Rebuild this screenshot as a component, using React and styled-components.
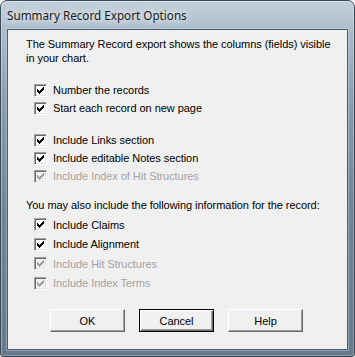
import React from "react";
import styled, { createGlobalStyle, css } from "styled-components";

const GlobalStyle = createGlobalStyle`
  html, body {
    margin: 0;
    padding: 0;
    background: #ffffff;
  }
`;

const Window = styled.div`
  box-sizing: border-box;
  width: 355px;
  height: 357px;
  border: 1px solid #3b4856;
  border-radius: 7px 7px 3px 3px;
  padding: 0 6px 6px 6px;
  display: flex;
  flex-direction: column;
  background: linear-gradient(
    to bottom,
    #c4d0dc 0px,
    #aebdcc 28px,
    #8fa1b3 90px,
    #72859a 200px,
    #66798d 100%
  );
  box-shadow: inset 1px 1px 0 rgba(255, 255, 255, 0.35),
    inset -1px -1px 0 rgba(255, 255, 255, 0.25);
  font-family: "Liberation Sans", Arial, sans-serif;
`;

const TitleBar = styled.div`
  height: 28px;
  display: flex;
  align-items: center;
  font-family: "Noto Sans", "Open Sans", sans-serif;
  font-size: 11.7px;
  color: #1a1a1a;
  text-shadow: 0 0 6px rgba(255, 255, 255, 0.95), 0 0 10px rgba(255, 255, 255, 0.8);
`;

const Client = styled.div`
  flex: 1;
  background: #f0f0f0;
  border: 1px solid #4c5c6d;
  box-shadow: 0 0 0 1px rgba(200, 215, 230, 0.45);
  padding: 7px 0 0 18px;
  font-size: 11px;
  letter-spacing: -0.05px;
  color: #000;
  white-space: nowrap;
`;

const Para = styled.div`
  line-height: 14px;
  margin-top: ${(p) => p.$top || 0}px;
`;

const Group = styled.div`
  margin-top: ${(p) => p.$top}px;
  padding-left: 8px;
`;

const Row = styled.div`
  height: ${(p) => p.$h}px;
  display: flex;
  align-items: center;
  gap: 6px;
  color: ${(p) => (p.$disabled ? "#a3a3a3" : "#000")};
`;

const Box = styled.span`
  box-sizing: border-box;
  width: 13px;
  height: 13px;
  flex: none;
  display: flex;
  align-items: center;
  justify-content: center;
  background: ${(p) => (p.$disabled ? "#f0f0f0" : "#fff")};
  border: 1px solid;
  border-color: #a0a0a0 #ffffff #ffffff #a0a0a0;
  box-shadow: inset 1px 1px 0 #696969, inset -1px -1px 0 #e3e3e3;
`;

const ButtonRow = styled.div`
  margin-top: 16px;
  display: flex;
  gap: 14px;
  padding-left: 24px;
`;

const Button = styled.div`
  box-sizing: border-box;
  width: 75px;
  height: 23px;
  display: flex;
  align-items: center;
  justify-content: center;
  background: #f0f0f0;
  border: 1px solid;
  border-color: #ffffff #696969 #696969 #ffffff;
  box-shadow: inset -1px -1px 0 #a0a0a0;
  ${(p) =>
    p.$default &&
    css`
      border: 1px solid #000;
      box-shadow: inset 1px 1px 0 #fff, inset -1px -1px 0 #696969,
        inset -2px -2px 0 #a0a0a0;
    `}
`;

const Check = ({ disabled }) => {
  const px = [
    [6, 0], [5, 1], [6, 1], [0, 2], [4, 2], [5, 2], [6, 2],
    [0, 3], [1, 3], [3, 3], [4, 3], [5, 3],
    [0, 4], [1, 4], [2, 4], [3, 4], [4, 4],
    [1, 5], [2, 5], [3, 5], [2, 6],
  ];
  return (
    <svg width="7" height="7" viewBox="0 0 7 7" shapeRendering="crispEdges">
      {px.map(([x, y]) => (
        <rect key={`${x}-${y}`} x={x} y={y} width="1" height="1" fill={disabled ? "#a0a0a0" : "#000"} />
      ))}
    </svg>
  );
};

const CheckRow = ({ label, disabled, h }) => (
  <Row $h={h} $disabled={disabled}>
    <Box $disabled={disabled}>
      <Check disabled={disabled} />
    </Box>
    <span>{label}</span>
  </Row>
);

export default function App() {
  return (
    <>
      <GlobalStyle />
      <Window>
        <TitleBar>Summary Record Export Options</TitleBar>
        <Client>
          <Para>
            The Summary Record export shows the columns (fields) visible
            <br />
            in your chart.
          </Para>
          <Group $top={16}>
            <CheckRow h={18} label="Number the records" />
            <CheckRow h={18} label="Start each record on new page" />
          </Group>
          <Group $top={14}>
            <CheckRow h={18} label="Include Links section" />
            <CheckRow h={18} label="Include editable Notes section" />
            <CheckRow h={18} disabled label="Include Index of Hit Structures" />
          </Group>
          <Para $top={13}>
            You may also include the following information for the record:
          </Para>
          <Group $top={3}>
            <CheckRow h={19.5} label="Include Claims" />
            <CheckRow h={19.5} label="Include Alignment" />
            <CheckRow h={19.5} disabled label="Include Hit Structures" />
            <CheckRow h={19.5} disabled label="Include Index Terms" />
          </Group>
          <ButtonRow>
            <Button>OK</Button>
            <Button $default>Cancel</Button>
            <Button>Help</Button>
          </ButtonRow>
        </Client>
      </Window>
    </>
  );
}
